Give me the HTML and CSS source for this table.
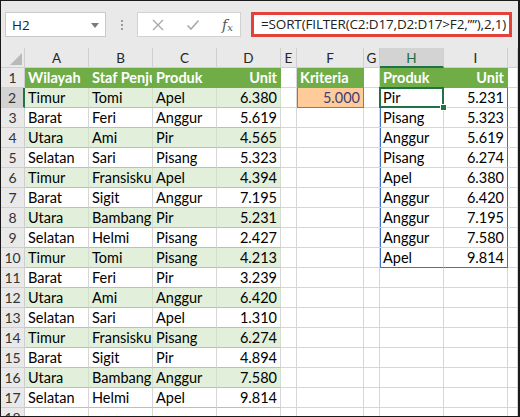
FILE: index.html
```html
<!DOCTYPE html>
<html lang="id">
<head>
<meta charset="utf-8">
<title>SORT FILTER</title>
<link rel="stylesheet" href="styles.css">
</head>
<body>
<div class="app">
  <div class="fbar">
    <div class="namebox"><span>H2</span><svg class="dd" width="8" height="5" viewBox="0 0 8 5"><path d="M0 0h8L4 5z" fill="#7a7a7a"/></svg></div>
    <div class="grip"><i></i><i></i><i></i></div>
    <div class="fxbox">
      <svg class="ico" width="14" height="14" viewBox="0 0 14 14"><path d="M2 2L12 12M12 2L2 12" stroke="#a9a9a9" stroke-width="1.4" fill="none"/></svg>
      <svg class="ico" width="14" height="14" viewBox="0 0 14 14"><path d="M1.5 7.5L5 11L12.5 2.5" stroke="#a9a9a9" stroke-width="1.6" fill="none"/></svg>
      <span class="fx">f<sub>x</sub></span>
    </div>
    <div class="formula">=SORT(FILTER(C2:D17,D2:D17&gt;F2,””),2,1)</div>
  </div>
  <div class="sheet">
    <div class="corner"></div><div class="ch">A</div><div class="ch">B</div><div class="ch">C</div><div class="ch">D</div><div class="ch">E</div><div class="ch">F</div><div class="ch">G</div><div class="ch sel">H</div><div class="ch">I</div><div class="ch"></div>

    <div class="rh">1</div><div class="c g">Wilayah</div><div class="c g">Staf Penjualan</div><div class="c g">Produk</div><div class="c g n">Unit</div><div class="c"></div><div class="c g">Kriteria</div><div class="c"></div><div class="c g">Produk</div><div class="c g n">Unit</div><div class="c"></div>

    <div class="rh rsel">2</div><div class="c b">Timur</div><div class="c b">Tomi</div><div class="c b">Apel</div><div class="c b n">6.380</div><div class="c"></div><div class="c inp n">5.000</div><div class="c"></div><div class="c sp-l active">Pir<span class="handle"></span></div><div class="c sp-r n">5.231</div><div class="c"></div>

    <div class="rh">3</div><div class="c w">Barat</div><div class="c w">Feri</div><div class="c w">Anggur</div><div class="c w n">5.619</div><div class="c"></div><div class="c"></div><div class="c"></div><div class="c sp-l">Pisang</div><div class="c sp-r n">5.323</div><div class="c"></div>

    <div class="rh">4</div><div class="c b">Utara</div><div class="c b">Ami</div><div class="c b">Pir</div><div class="c b n">4.565</div><div class="c"></div><div class="c"></div><div class="c"></div><div class="c sp-l">Anggur</div><div class="c sp-r n">5.619</div><div class="c"></div>

    <div class="rh">5</div><div class="c w">Selatan</div><div class="c w">Sari</div><div class="c w">Pisang</div><div class="c w n">5.323</div><div class="c"></div><div class="c"></div><div class="c"></div><div class="c sp-l">Pisang</div><div class="c sp-r n">6.274</div><div class="c"></div>

    <div class="rh">6</div><div class="c b">Timur</div><div class="c b">Fransiskus</div><div class="c b">Apel</div><div class="c b n">4.394</div><div class="c"></div><div class="c"></div><div class="c"></div><div class="c sp-l">Apel</div><div class="c sp-r n">6.380</div><div class="c"></div>

    <div class="rh">7</div><div class="c w">Barat</div><div class="c w">Sigit</div><div class="c w">Anggur</div><div class="c w n">7.195</div><div class="c"></div><div class="c"></div><div class="c"></div><div class="c sp-l">Anggur</div><div class="c sp-r n">6.420</div><div class="c"></div>

    <div class="rh">8</div><div class="c b">Utara</div><div class="c b">Bambang</div><div class="c b">Pir</div><div class="c b n">5.231</div><div class="c"></div><div class="c"></div><div class="c"></div><div class="c sp-l">Anggur</div><div class="c sp-r n">7.195</div><div class="c"></div>

    <div class="rh">9</div><div class="c w">Selatan</div><div class="c w">Helmi</div><div class="c w">Pisang</div><div class="c w n">2.427</div><div class="c"></div><div class="c"></div><div class="c"></div><div class="c sp-l">Anggur</div><div class="c sp-r n">7.580</div><div class="c"></div>

    <div class="rh">10</div><div class="c b">Timur</div><div class="c b">Tomi</div><div class="c b">Pisang</div><div class="c b n">4.213</div><div class="c"></div><div class="c"></div><div class="c"></div><div class="c sp-l sp-b">Apel</div><div class="c sp-r sp-b n">9.814</div><div class="c"></div>

    <div class="rh">11</div><div class="c w">Barat</div><div class="c w">Feri</div><div class="c w">Pir</div><div class="c w n">3.239</div><div class="c"></div><div class="c"></div><div class="c"></div><div class="c"></div><div class="c"></div><div class="c"></div>

    <div class="rh">12</div><div class="c b">Utara</div><div class="c b">Ami</div><div class="c b">Anggur</div><div class="c b n">6.420</div><div class="c"></div><div class="c"></div><div class="c"></div><div class="c"></div><div class="c"></div><div class="c"></div>

    <div class="rh">13</div><div class="c w">Selatan</div><div class="c w">Sari</div><div class="c w">Apel</div><div class="c w n">1.310</div><div class="c"></div><div class="c"></div><div class="c"></div><div class="c"></div><div class="c"></div><div class="c"></div>

    <div class="rh">14</div><div class="c b">Timur</div><div class="c b">Fransiskus</div><div class="c b">Pisang</div><div class="c b n">6.274</div><div class="c"></div><div class="c"></div><div class="c"></div><div class="c"></div><div class="c"></div><div class="c"></div>

    <div class="rh">15</div><div class="c w">Barat</div><div class="c w">Sigit</div><div class="c w">Pir</div><div class="c w n">4.894</div><div class="c"></div><div class="c"></div><div class="c"></div><div class="c"></div><div class="c"></div><div class="c"></div>

    <div class="rh">16</div><div class="c b">Utara</div><div class="c b">Bambang</div><div class="c b">Anggur</div><div class="c b n">7.580</div><div class="c"></div><div class="c"></div><div class="c"></div><div class="c"></div><div class="c"></div><div class="c"></div>

    <div class="rh">17</div><div class="c w">Selatan</div><div class="c w">Helmi</div><div class="c w">Apel</div><div class="c w n">9.814</div><div class="c"></div><div class="c"></div><div class="c"></div><div class="c"></div><div class="c"></div><div class="c"></div>

    <div class="rh">18</div><div class="c"></div><div class="c"></div><div class="c"></div><div class="c"></div><div class="c"></div><div class="c"></div><div class="c"></div><div class="c"></div><div class="c"></div><div class="c"></div>
  </div>
</div>
</body>
</html>
```

FILE: styles.css
```css
* { box-sizing: border-box; }
html, body { margin: 0; padding: 0; background: #fff; }
body { font-family: "Lato", "Liberation Sans", sans-serif; }

.app {
  width: 520px;
  height: 417px;
  border-top: 1px solid #1a1a1a;
  border-left: 1px solid #1a1a1a;
  border-right: 2px solid #1a1a1a;
  border-bottom: 1px solid #1a1a1a;
  overflow: hidden;
  background: #fff;
}

/* formula bar */
.fbar {
  height: 47px;
  background: #e9e9e9;
  display: flex;
  align-items: flex-start;
  padding: 11px 0 0 4px;
}
.namebox {
  width: 101px;
  height: 25px;
  background: #fff;
  border: 1px solid #c9c9c9;
  display: flex;
  align-items: center;
  justify-content: space-between;
  padding: 0 6px 0 6px;
  font-family: "Open Sans", "Liberation Sans", sans-serif;
  font-size: 13.5px;
  color: #222;
}
.namebox .dd { margin-top: 1px; }
.grip {
  width: 31px;
  height: 25px;
  display: flex;
  flex-direction: column;
  align-items: center;
  justify-content: center;
  gap: 2px;
}
.grip i { display: block; width: 2px; height: 2px; background: #9a9a9a; }
.fxbox {
  width: 104px;
  height: 25px;
  background: #fff;
  border: 1px solid #d2d2d2;
  display: flex;
  align-items: center;
  padding: 0 0 0 13px;
  gap: 21px;
}
.fx {
  font-family: "DejaVu Serif", "Liberation Serif", serif;
  font-style: italic;
  font-size: 14px;
  color: #555;
  margin-left: 1px;
}
.fx sub { font-size: 10px; vertical-align: -1px; }
.formula {
  margin-left: 10px;
  width: 261px;
  height: 25px;
  background: #fff;
  border: 3px solid #e2423a;
  padding: 0 0 0 7px;
  font-family: "Open Sans", "Liberation Sans", sans-serif;
  font-size: 13.5px;
  line-height: 19px;
  color: #222;
  white-space: nowrap;
  overflow: hidden;
  letter-spacing: -0.15px;
}

/* sheet grid */
.sheet {
  display: grid;
  grid-template-columns: 24px 64px 64px 64px 64px 16px 67px 16px 64px 64px 1fr;
  grid-auto-rows: 20px;
  font-size: 14.5px;
  color: #000;
}
.corner {
  background: #e9e9e9;
  border-right: 1px solid #cfcfcf;
  border-bottom: 1px solid #cfcfcf;
  position: relative;
}
.corner::after {
  content: "";
  position: absolute;
  right: 2px;
  bottom: 2px;
  border-style: solid;
  border-width: 0 0 12px 12px;
  border-color: transparent transparent #b9b9b9 transparent;
}
.ch {
  background: #e9e9e9;
  border-right: 1px solid #cfcfcf;
  border-bottom: 1px solid #cfcfcf;
  text-align: center;
  font-size: 13.5px;
  line-height: 20px;
  color: #262626;
}
.ch.sel {
  background: #d3d3d3;
  color: #1e6b3f;
  border-bottom: 2px solid #217346;
}
.rh {
  background: #e9e9e9;
  border-right: 1px solid #cfcfcf;
  border-bottom: 1px solid #cfcfcf;
  text-align: center;
  font-size: 14px;
  line-height: 20px;
  color: #333;
}
.rh.rsel {
  background: #d3d3d3;
  border-right: 2px solid #217346;
}
.c {
  border-right: 1px solid #d6d6d6;
  border-bottom: 1px solid #d6d6d6;
  padding: 0 3px;
  line-height: 19px;
  white-space: nowrap;
  overflow: hidden;
  position: relative;
}
.c.n { text-align: right; }
.c.g {
  background: #70ad47;
  color: #fff;
  font-weight: 700;
  border-right-color: #70ad47;
  border-bottom-color: #70ad47;
}
.c.b {
  background: #e2efda;
  border-bottom-color: #a9d08e;
  border-right-color: #d3dfcc;
}
.c.w {
  background: #fff;
  border-bottom-color: #a9d08e;
}
.c.inp {
  background: #ffcc99;
  color: #3f3f76;
  box-shadow: inset 1px 0 #7f7f7f;
  border-right-color: #7f7f7f;
  border-bottom-color: #7f7f7f;
}
.c.sp-l { box-shadow: inset 1px 0 #4472c4; }
.c.sp-r { border-right-color: #4472c4; }
.c.sp-b { border-bottom-color: #4472c4; }

.c.active { overflow: visible; }
.c.active::after {
  content: "";
  position: absolute;
  left: -1px;
  top: -1px;
  right: -1px;
  bottom: -1px;
  border: 2px solid #217346;
  pointer-events: none;
}
.handle {
  position: absolute;
  right: -4px;
  bottom: -4px;
  width: 7px;
  height: 7px;
  background: #217346;
  border: 1px solid #fff;
  z-index: 2;
}
```
